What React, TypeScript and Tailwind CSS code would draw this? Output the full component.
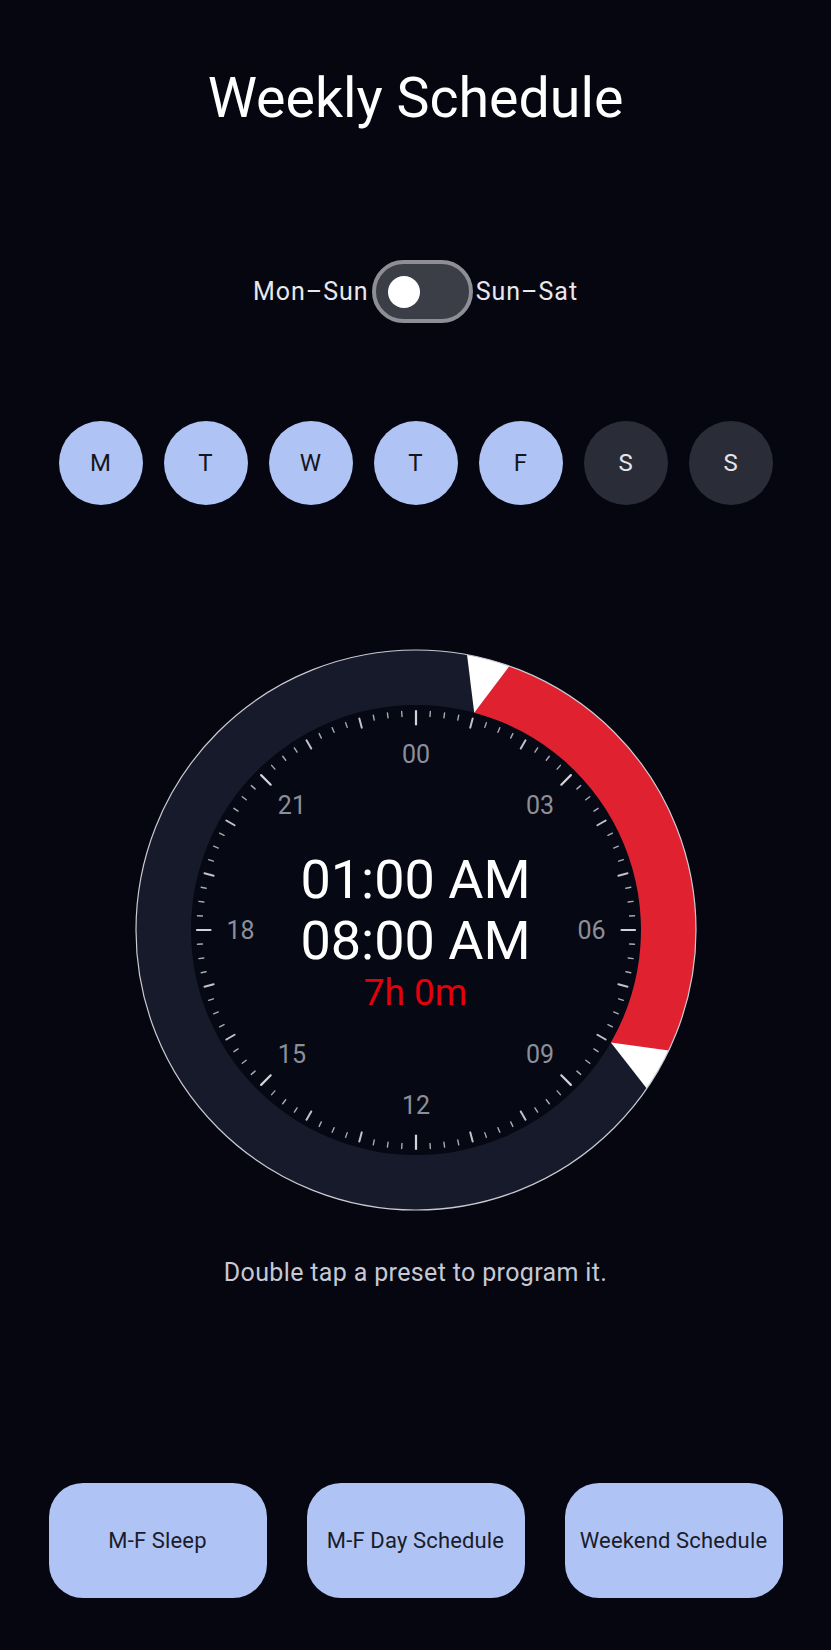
import React from 'react';

const DAYS = [
  { label: 'M', on: true },
  { label: 'T', on: true },
  { label: 'W', on: true },
  { label: 'T', on: true },
  { label: 'F', on: true },
  { label: 'S', on: false },
  { label: 'S', on: false },
];

const PRESETS = ['M-F Sleep', 'M-F Day Schedule', 'Weekend Schedule'];

const SIZE = 562;
const C = SIZE / 2;
const R_OUT = 280;
const R_IN = 225;

// start / end of the selected range, in degrees from the top (24h dial)
const START_DEG = 15;
const END_DEG = 120;

const pt = (r: number, deg: number) => {
  const a = (deg * Math.PI) / 180;
  return `${(C + r * Math.sin(a)).toFixed(2)} ${(C - r * Math.cos(a)).toFixed(2)}`;
};

const xy = (r: number, deg: number) => {
  const a = (deg * Math.PI) / 180;
  return { x: C + r * Math.sin(a), y: C - r * Math.cos(a) };
};

const Thumb: React.FC<{ deg: number }> = ({ deg }) => (
  <path
    d={`M ${pt(R_IN, deg)} L ${pt(R_OUT, deg - 4.5)} A ${R_OUT} ${R_OUT} 0 0 1 ${pt(R_OUT, deg + 4.5)} Z`}
    fill="#ffffff"
  />
);

const Dial: React.FC = () => {
  const ticks = Array.from({ length: 96 }, (_, i) => {
    const deg = i * 3.75;
    const major = i % 12 === 0;
    const hour = i % 4 === 0;
    const r1 = 219;
    const r0 = major ? 205.5 : hour ? 209.5 : 214;
    const a = xy(r0, deg);
    const b = xy(r1, deg);
    return (
      <line
        key={i}
        x1={a.x}
        y1={a.y}
        x2={b.x}
        y2={b.y}
        stroke={major ? '#d2d3d8' : hour ? '#c2c3c9' : '#a9abb3'}
        strokeWidth={major ? 2.2 : hour ? 2 : 1.4}
        strokeLinecap="round"
      />
    );
  });

  const labels = ['00', '03', '06', '09', '12', '15', '18', '21'];

  return (
    <svg width={SIZE} height={SIZE} viewBox={`0 0 ${SIZE} ${SIZE}`}>
      <circle cx={C} cy={C} r={R_OUT} fill="#161a2a" />
      <circle cx={C} cy={C} r={R_IN} fill="#060814" />
      <path
        d={`M ${pt(R_IN, START_DEG)} L ${pt(R_OUT, START_DEG)} A ${R_OUT} ${R_OUT} 0 0 1 ${pt(
          R_OUT,
          END_DEG,
        )} L ${pt(R_IN, END_DEG)} A ${R_IN} ${R_IN} 0 0 0 ${pt(R_IN, START_DEG)} Z`}
        fill="#e0212f"
      />
      <Thumb deg={START_DEG} />
      <Thumb deg={END_DEG} />
      <circle cx={C} cy={C} r={R_OUT} fill="none" stroke="#c9cbd3" strokeWidth={1.2} />
      {ticks}
      {labels.map((l, i) => {
        const p = xy(175.5, i * 45);
        return (
          <text
            key={l}
            x={p.x}
            y={p.y}
            textAnchor="middle"
            dominantBaseline="central"
            fill="#8d8f98"
            fontSize={25}
            fontFamily="Roboto, sans-serif"
          >
            {l}
          </text>
        );
      })}
    </svg>
  );
};

export default function App() {
  return (
    <div className="min-h-screen w-full bg-[#05060f] font-['Roboto','Noto_Sans',sans-serif] flex flex-col items-center">
      <h1 className="pt-[67px] text-[55.5px] leading-[64px] text-white font-normal">Weekly Schedule</h1>

      <div className="mt-[129px] h-[63px] flex items-center justify-center text-[25px] tracking-[1px] text-[#e8e8ec]">
        <span>Mon–Sun</span>
        <div className="ml-[3px] mr-[3px] w-[101px] h-[63px] rounded-full border-4 border-[#8e8f96] bg-[#3c3e47] flex items-center pl-[12px]">
          <div className="w-[32px] h-[32px] rounded-full bg-white" />
        </div>
        <span>Sun–Sat</span>
      </div>

      <div className="mt-[98px] flex justify-center gap-[21px]">
        {DAYS.map((d, i) => (
          <div
            key={i}
            className={
              d.on
                ? 'w-[84px] h-[84px] rounded-full bg-[#afc3f5] text-[#15161c] flex items-center justify-center text-[24px]'
                : 'w-[84px] h-[84px] rounded-full bg-[#2a2d37] text-[#e4e5ea] flex items-center justify-center text-[24px]'
            }
          >
            {d.label}
          </div>
        ))}
      </div>

      <div className="mt-[144px] relative">
        <Dial />
        <div className="absolute inset-0 flex flex-col items-center justify-center pt-[4px] pointer-events-none">
          <div className="text-[54px] leading-[61px] text-white">01:00 AM</div>
          <div className="text-[54px] leading-[61px] text-white">08:00 AM</div>
          <div className="text-[37px] leading-[44px] text-[#e4000c]">7h 0m</div>
        </div>
      </div>

      <p className="mt-[46px] text-[25px] leading-[32px] tracking-[0.35px] text-[#c6c9d5]">
        Double tap a preset to program it.
      </p>

      <div className="mt-[194px] mb-[52px] flex justify-center gap-[40px]">
        {PRESETS.map((p) => (
          <button
            key={p}
            className="w-[218px] h-[115px] rounded-[34px] bg-[#afc3f5] text-[#1a1c2a] text-[22px] tracking-[0.15px] flex items-center justify-center"
          >
            {p}
          </button>
        ))}
      </div>
    </div>
  );
}
